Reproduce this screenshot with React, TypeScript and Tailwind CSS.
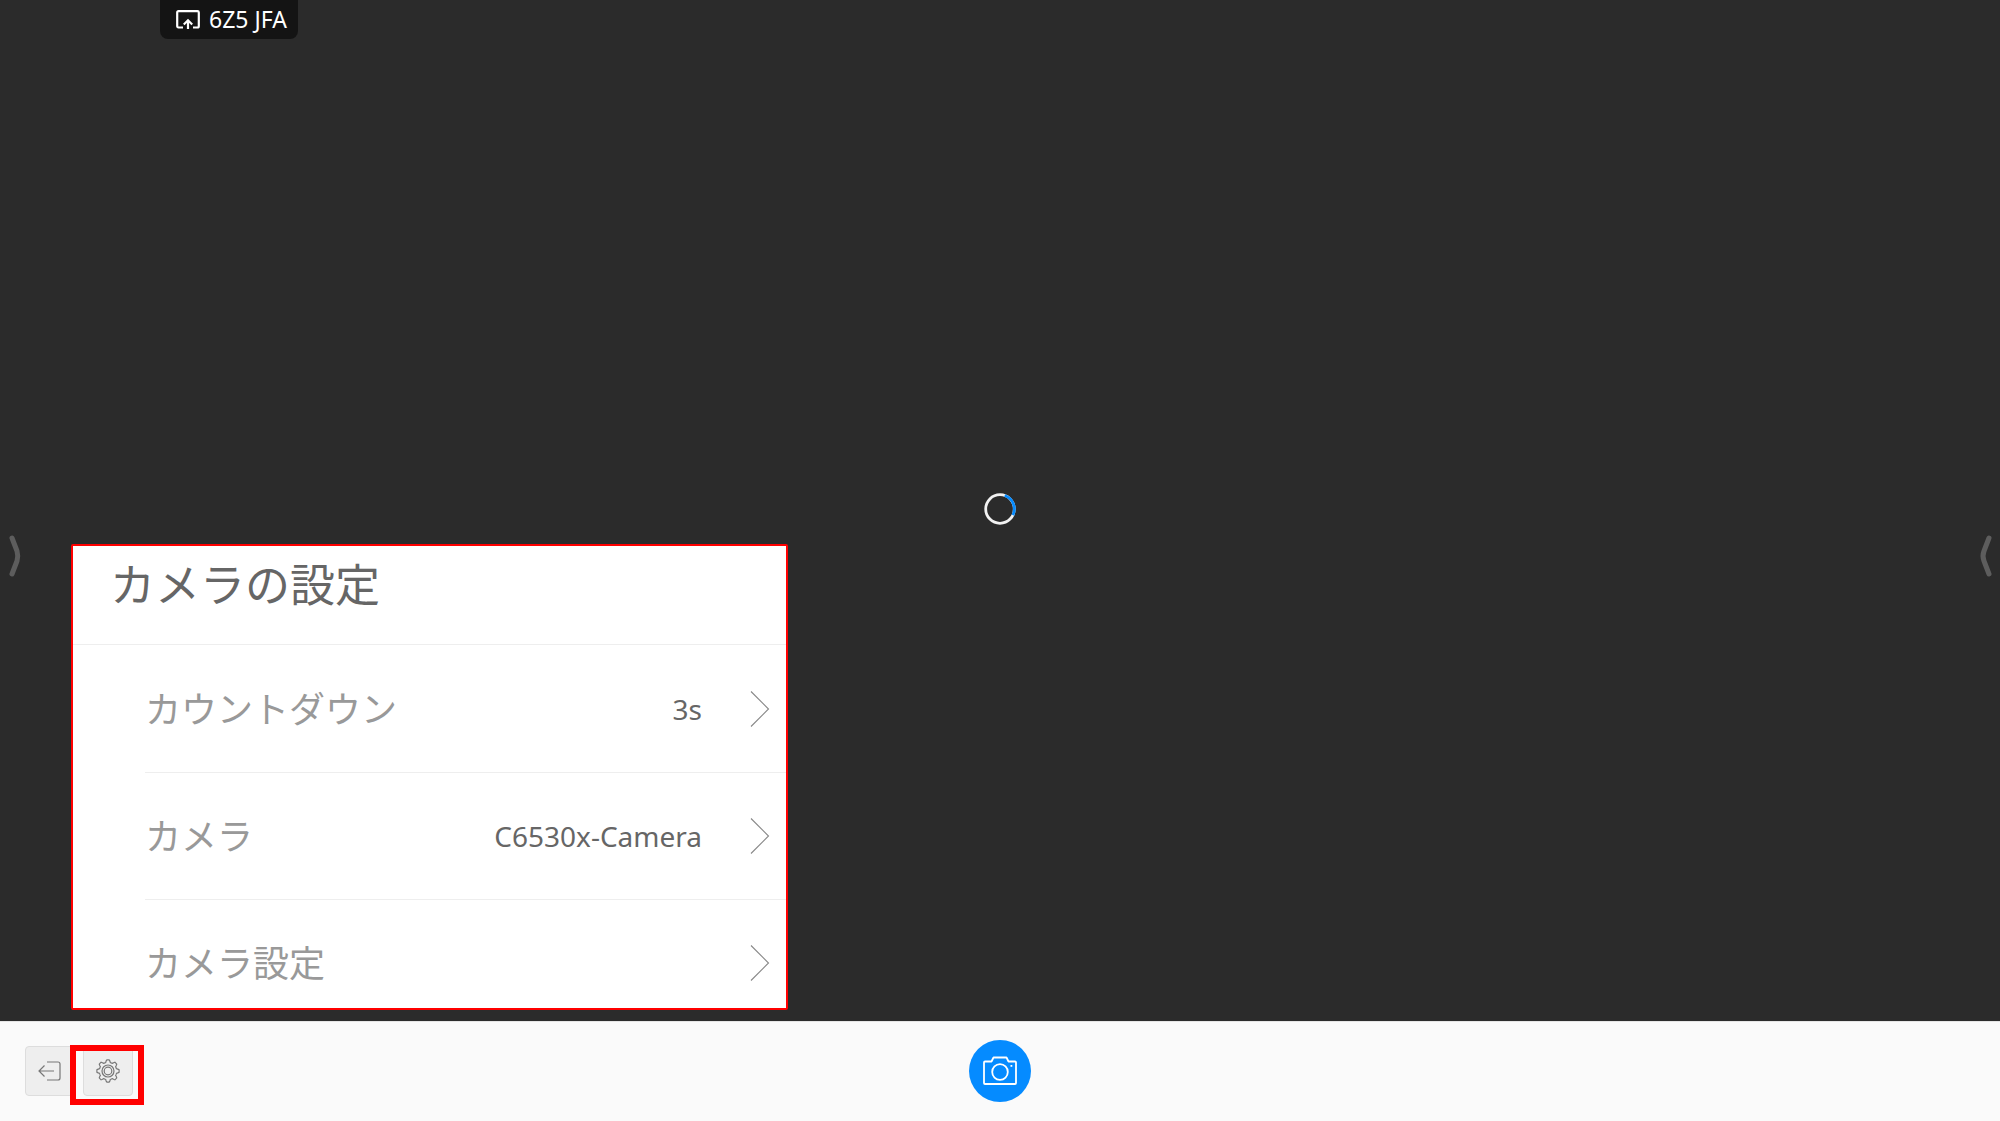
const SETTINGS = [
  { label: 'カウントダウン', value: '3s' },
  { label: 'カメラ', value: 'C6530x-Camera' },
  { label: 'カメラ設定', value: '' },
];

function ShareIcon() {
  return (
    <svg className="h-5 w-6" viewBox="0 0 24 20" fill="none" stroke="#fff" strokeWidth="2.200" aria-hidden="true">
      <path d="M7 17.500H2.500Q1.200 17.500 1.200 16V2.500Q1.200 1.200 2.500 1.200H21.500Q22.800 1.200 22.800 2.500V16Q22.800 17.500 21.500 17.500H17" />
      <path d="M12 19V11M7.800 14.500L12 10.300L16.200 14.500" />
    </svg>
  );
}

function EdgeHandle({ side }: { side: 'left' | 'right' }) {
  return (
    <button
      type="button"
      aria-label={side === 'left' ? '左パネルを開く' : '右パネルを開く'}
      className="h-10 w-4"
    >
      <svg
        className="h-10 w-4 overflow-visible"
        viewBox="0 0 16 40"
        fill="none"
        stroke="#5d5d5d"
        strokeWidth="5"
        strokeLinecap="round"
        strokeLinejoin="round"
      >
        <path d={side === 'left' ? 'M4 2L9 15Q10.500 20 9 25L4 38' : 'M13 2L8 15Q6 20 8 25L13 38'} />
      </svg>
    </button>
  );
}

function Chevron() {
  return (
    <svg className="h-9 w-5" viewBox="0 0 20 36" fill="none" stroke="#888" strokeWidth="1.100" aria-hidden="true">
      <path d="M1 0.500L18.500 18L1 35.500" />
    </svg>
  );
}

function SettingsPanel() {
  return (
    <section className="absolute bottom-[11px] left-[71px] h-[466px] w-[717px] overflow-hidden rounded-xs border-2 border-[#ff0000] bg-white">
      <h1 className="flex h-[99px] border-b border-[#eee] pt-1.5 pl-[37px] text-[45px] leading-[66px] text-[#666]">
        カメラの設定
      </h1>
      <ul className="pt-px pl-[72px]">
        {SETTINGS.map((item) => (
          <li key={item.label} className="border-b border-[#eee]">
            <button type="button" className="flex h-[126px] w-full items-center pr-4 text-left">
              <span className="flex-1 pt-0.5 text-[36px] text-[#999]">{item.label}</span>
              <span className="mr-12 text-[28px] text-[#666]">{item.value}</span>
              <Chevron />
            </button>
          </li>
        ))}
      </ul>
    </section>
  );
}

function ExitIcon() {
  return (
    <svg className="h-5 w-6" viewBox="0 0 24 20" fill="none" stroke="#777" strokeWidth="1.200" aria-hidden="true">
      <path d="M9 1H20Q22 1 22 3V17Q22 19 20 19H9" />
      <path d="M16 10H1M6.500 4.500L1 10L6.500 15.500" />
    </svg>
  );
}

function gearOutline() {
  const points: string[] = [];
  for (let i = 0; i <= 160; i++) {
    const a = (i / 160) * Math.PI * 2;
    const wave = Math.max(-1, Math.min(1, Math.cos(a * 8) * 1.7));
    const r = 9.9 + wave * 1.2;
    points.push(`${(12 + r * Math.sin(a)).toFixed(2)} ${(12 - r * Math.cos(a)).toFixed(2)}`);
  }
  return `M${points.join('L')}Z`;
}

function GearIcon() {
  return (
    <svg className="size-6" viewBox="0 0 24 24" fill="none" stroke="#777" strokeWidth="1.200" aria-hidden="true">
      <path d={gearOutline()} />
      <circle cx="12" cy="12" r="6" />
      <circle cx="12" cy="12" r="3.800" />
    </svg>
  );
}

function CameraIcon() {
  return (
    <svg className="h-8 w-9" viewBox="0 0 36 32" fill="none" stroke="#fff" strokeWidth="1.800" strokeLinejoin="round" aria-hidden="true">
      <path d="M3 6.500H9.500L11.500 2.500H24.500L26.500 6.500H33Q34 6.500 34 7.500V28Q34 29 33 29H3Q2 29 2 28V7.500Q2 6.500 3 6.500Z" />
      <circle cx="18" cy="17" r="7.800" />
      <rect x="28.500" y="10" width="1.800" height="1.800" fill="#fff" stroke="none" />
    </svg>
  );
}

export default function App() {
  return (
    <div className="relative flex min-h-screen flex-col bg-[#2b2b2b] font-['Noto_Sans','Noto_Sans_CJK_JP',sans-serif]">
      <main className="relative flex flex-1 flex-col">
        <div className="ml-40 flex h-[39px] items-center gap-[9px] self-start rounded-b-lg bg-[#141414] pr-[11px] pl-4 text-[23px] text-white">
          <ShareIcon />
          <span>6Z5 JFA</span>
        </div>
        <div className="absolute inset-0 flex items-center justify-center pb-1" role="status" aria-label="読み込み中">
          <svg className="size-8" viewBox="0 0 32 32" fill="none" strokeWidth="2.800">
            <circle cx="16" cy="16" r="14.300" stroke="#f2f2f2" />
            <path d="M20.700 2.500A14.300 14.300 0 0 1 28.900 22.200" stroke="#058bff" />
          </svg>
        </div>
        <SettingsPanel />
      </main>
      <div className="pointer-events-none absolute inset-0 flex items-center justify-between px-2 pb-2.5">
        <EdgeHandle side="left" />
        <EdgeHandle side="right" />
      </div>
      <footer className="grid h-[100px] grid-cols-3 items-center border-t border-[#e5e5e5] bg-[#fafafa] pb-0.5">
        <div className="flex items-center pl-[25px]">
          <button
            type="button"
            aria-label="終了"
            className="flex size-[50px] items-center justify-center rounded-l border border-[#ddd] bg-[#eee]"
          >
            <ExitIcon />
          </button>
          <div className="relative ml-2">
            <button
              type="button"
              aria-label="カメラの設定"
              className="flex size-[50px] items-center justify-center rounded border border-[#ddd] bg-[#eee]"
            >
              <GearIcon />
            </button>
            <div className="pointer-events-none absolute -top-px -right-[11px] -bottom-[9px] -left-[13px] border-6 border-[#ff0000]" />
          </div>
        </div>
        <button
          type="button"
          aria-label="撮影"
          className="flex size-[62px] items-center justify-center justify-self-center rounded-full bg-[#058bff]"
        >
          <CameraIcon />
        </button>
      </footer>
    </div>
  );
}
